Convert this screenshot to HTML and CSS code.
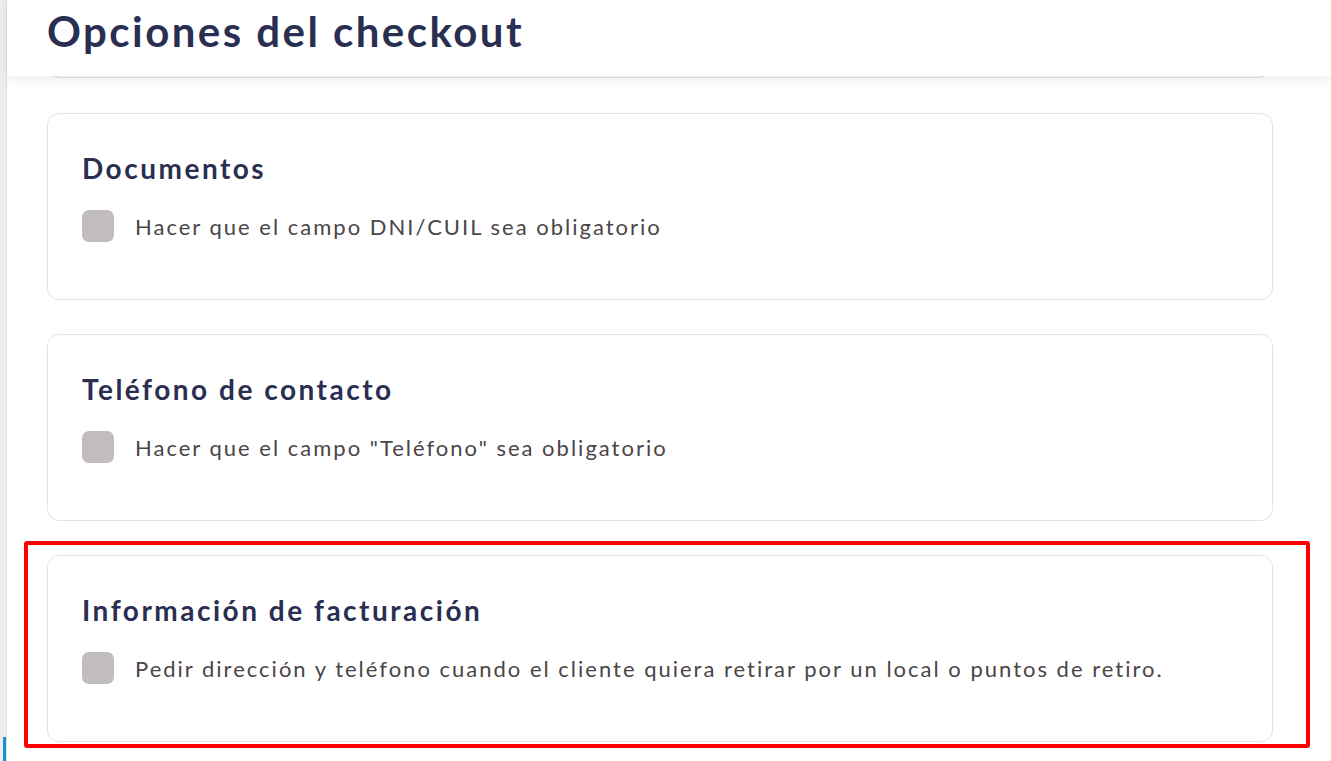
FILE: index.html
```html
<!DOCTYPE html>
<html lang="es">
<head>
  <meta charset="UTF-8">
  <title>Opciones del checkout</title>
  <link rel="stylesheet" href="styles.css">
</head>
<body>

  <div class="side-edge">
    <span class="side-mark"></span>
  </div>

  <div class="main">
    <div class="page-header">
      <h1>Opciones del checkout</h1>
    </div>
    <div class="prev-card"></div>

    <div class="cards">
      <div class="card">
        <h3>Documentos</h3>
        <label class="check">
          <span class="box"></span>
          Hacer que el campo DNI/CUIL sea obligatorio
        </label>
      </div>

      <div class="card">
        <h3>Teléfono de contacto</h3>
        <label class="check">
          <span class="box"></span>
          Hacer que el campo "Teléfono" sea obligatorio
        </label>
      </div>

      <div class="highlight">
        <div class="card">
          <h3>Información de facturación</h3>
          <label class="check">
            <span class="box"></span>
            Pedir dirección y teléfono cuando el cliente quiera retirar por un local o puntos de retiro.
          </label>
        </div>
      </div>
    </div>
  </div>

</body>
</html>
```

FILE: styles.css
```css
body {
  margin: 0;
  font-family: Lato, "Open Sans", sans-serif;
  background: #fff;
  display: flex;
  min-height: 761px;
  overflow: hidden;
}
.side-edge {
  width: 6px;
  background: #ededed;
  border-right: 1px solid #dedede;
  display: flex;
  flex-direction: column;
  justify-content: flex-end;
}
.side-mark {
  display: block;
  width: 3px;
  height: 24px;
  margin-left: 3px;
  background: #1a8fd6;
}
.main {
  flex: 1;
}
.page-header {
  position: relative;
  z-index: 1;
  height: 76px;
  padding-left: 40px;
  background: #fff;
  box-shadow: 0 4px 10px rgba(0, 0, 0, 0.07);
}
h1 {
  margin: 0;
  padding-top: 6px;
  font-size: 42px;
  font-weight: 700;
  color: #2a2f52;
  letter-spacing: 2.45px;
}
.prev-card {
  height: 10px;
  margin: -9px 62px 0 42px;
  border: 1px solid #e2e2e2;
  border-top: none;
  border-radius: 0 0 12px 12px;
}
.cards {
  display: flex;
  flex-direction: column;
  gap: 34px;
  padding: 35px 58px 0 40px;
}
.card {
  height: 187px;
  padding: 37px 34px 0;
  border: 1px solid #e4e4e4;
  border-radius: 12px;
  box-sizing: border-box;
}
.card h3 {
  margin: 0 0 25px;
  font-size: 28px;
  font-weight: 700;
  color: #2a2f52;
  letter-spacing: 2.5px;
}
.check {
  display: flex;
  align-items: center;
  gap: 21px;
  font-size: 22px;
  color: #4b4547;
  letter-spacing: 2px;
}
.box {
  width: 32px;
  height: 32px;
  border-radius: 7px;
  background: #c1bdbe;
  flex-shrink: 0;
}
.highlight {
  position: relative;
}
.highlight::after {
  content: "";
  position: absolute;
  top: -14px;
  left: -23px;
  right: -37px;
  bottom: -6px;
  border: 4px solid #ff0000;
  border-radius: 3px;
  pointer-events: none;
}
```
